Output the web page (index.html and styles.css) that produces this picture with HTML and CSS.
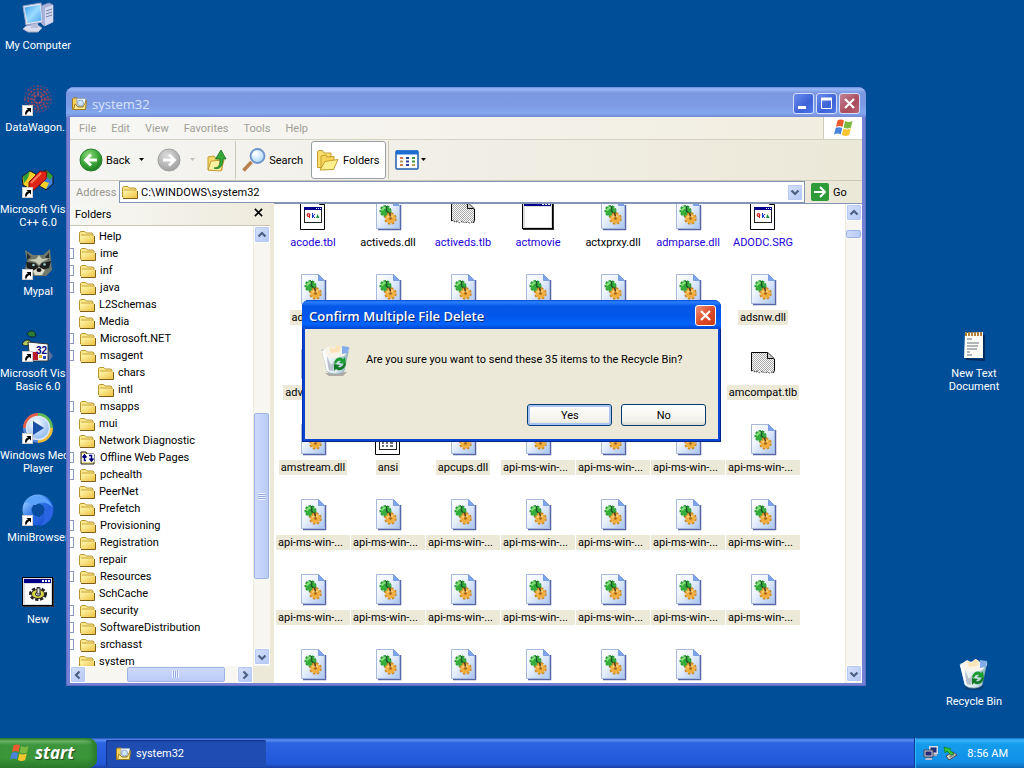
FILE: index.html
```
<!DOCTYPE html>
<html lang="en">
<head>
    <meta charset="UTF-8">
    <title>system32</title>
    <link rel="stylesheet" href="styles.css">
</head>
<body>
<svg class="sprite" width="0" height="0">
    <defs>
        <linearGradient id="gPage" x1="0" y1="0" x2="1" y2="1"><stop offset="0" stop-color="#fff"/><stop offset=".4" stop-color="#eef4fd"/><stop offset="1" stop-color="#a9c5f2"/></linearGradient>
        <linearGradient id="gFolder" x1="0" y1="0" x2="1" y2="1"><stop offset="0" stop-color="#fff9b0"/><stop offset="1" stop-color="#eec040"/></linearGradient>
        <linearGradient id="gScreen" x1="0" y1="0" x2="1" y2="1"><stop offset="0" stop-color="#3c9ef0"/><stop offset=".5" stop-color="#9cdcff"/><stop offset="1" stop-color="#4aa0ee"/></linearGradient>
        <linearGradient id="gBin" x1="0" y1="0" x2="1" y2="0"><stop offset="0" stop-color="#fff"/><stop offset=".5" stop-color="#dcebee"/><stop offset="1" stop-color="#8fb5c4"/></linearGradient>
        <linearGradient id="gRing" x1="0" y1="0" x2="1" y2="1"><stop offset="0" stop-color="#8cc8ff"/><stop offset=".5" stop-color="#2b6fe8"/><stop offset="1" stop-color="#1c4fd0"/></linearGradient>
        <radialGradient id="gBack" cx=".4" cy=".3" r=".7"><stop offset="0" stop-color="#8fdc7c"/><stop offset=".6" stop-color="#3ca83a"/><stop offset="1" stop-color="#1f7d22"/></radialGradient>
        <radialGradient id="gFwd" cx=".4" cy=".3" r=".7"><stop offset="0" stop-color="#dcdcdc"/><stop offset="1" stop-color="#a2a2a2"/></radialGradient>
        <radialGradient id="gLens" cx=".4" cy=".35" r=".7"><stop offset="0" stop-color="#fff"/><stop offset="1" stop-color="#a4d4f6"/></radialGradient>
        <radialGradient id="gWmp" cx=".4" cy=".3" r=".8"><stop offset="0" stop-color="#fff"/><stop offset="1" stop-color="#7fb0ee"/></radialGradient>
        <pattern id="pDots" width="2" height="2" patternUnits="userSpaceOnUse"><rect width="2" height="2" fill="#fff"/><rect width="1" height="1" fill="#a8a8a8"/><rect x="1" y="1" width="1" height="1" fill="#a8a8a8"/></pattern>
    </defs>
    <symbol id="dll" viewBox="0 0 32 32">
        <path d="M6 30.500h22.500V6" fill="none" stroke="#5566a8" stroke-width="1.500"/>
        <path d="M4.500.500h17L27.500 6.500v23h-23z" fill="url(#gPage)" stroke="#a9b9dc"/>
        <path d="M21.500.500V6.500h6z" fill="#7ba4ec" stroke="#7b9ee0"/>
        <circle cx="13.500" cy="12" r="5" fill="none" stroke="#2c9a34" stroke-width="2" stroke-dasharray="2.400 1.100"/>
        <circle cx="13.500" cy="12" r="4.800" fill="#35ad3a"/>
        <path d="M9.500 11.500l3-3 2.500 1" stroke="#86e07c" stroke-width="1.800" fill="none"/>
        <path d="M14.500 7v5l3 3" stroke="#1a5a2c" stroke-width="1.500" fill="none"/>
        <circle cx="18.500" cy="19.500" r="5" fill="none" stroke="#cf8a24" stroke-width="2.500" stroke-dasharray="2.400 1.500"/>
        <circle cx="18.500" cy="19.500" r="4.800" fill="#efae3e"/>
        <path d="M15 18.500l3-2 3 1" stroke="#fbd680" stroke-width="1.500" fill="none"/>
        <circle cx="18.500" cy="19.500" r="1.300" fill="#a0601c"/>
        <path d="M17.500 13.500l1 4" stroke="#5b3a1a" stroke-width="1.500"/>
    </symbol>
    <symbol id="tbl" viewBox="0 0 32 32">
        <path d="M3.500.500h19l5 5v25h-24z" fill="#fff" stroke="#000"/>
        <path d="M22.500.500v5h5" fill="none" stroke="#000"/>
        <rect x="7.500" y="8.500" width="17" height="15" fill="#fff" stroke="#222"/>
        <rect x="7" y="8" width="18" height="3" fill="#00008b"/>
        <path d="M19 9.500h1m1 0h1m1 0h1" stroke="#fff"/>
        <circle cx="11.500" cy="16" r="1.300" fill="none" stroke="#d01818" stroke-width="1.200"/><path d="M12.500 16v3" stroke="#d01818"/>
        <path d="M15.500 14v5m2.500-4l-2 2 2 2" stroke="#1c38c8" fill="none"/>
        <path d="M20.500 15l-1.500 4h3.500z" fill="#16943a"/>
    </symbol>
    <symbol id="inf" viewBox="0 0 32 32">
        <path d="M3.500.500h19l5 5v25h-24z" fill="#fff" stroke="#000"/>
        <rect x="7.500" y="8.500" width="17" height="17" fill="#fff" stroke="#222"/>
        <path d="M10 19h2m2 0h2m2 0h3M10 22h2m2 0h2m2 0h3" stroke="#444" stroke-width="1.500"/>
    </symbol>
    <symbol id="tlb" viewBox="0 0 32 32">
        <path d="M4.500 3.500h17l6 6V21l-2 3-3-2-2 2-3-2-2 2-3-2-3 2-3-2-2-1z" fill="url(#pDots)"/>
        <path d="M4.500 22V3.500h16l7 6.500v11l-1 3" fill="none" stroke="#000"/>
        <path d="M20.500 3.500V9.500h6" fill="#ccc" stroke="#000"/>
        <path d="M4.500 22l2-1 1 2 3-1 2 2 3-2 2 2 3-1 2 1 3-1" fill="none" stroke="#444" stroke-dasharray="2 1"/>
    </symbol>
    <symbol id="exe" viewBox="0 0 32 32">
        <rect x="1" y="2" width="31" height="29" fill="#333"/>
        <rect x=".500" y="1.500" width="30" height="28" fill="#dcdcdc" stroke="#000"/>
        <rect x="2" y="3" width="27" height="4" fill="#00008b"/>
        <rect x="3" y="8" width="26" height="20" fill="#fff"/>
        <path d="M20 5h2m1 0h2m1 0h2" stroke="#fff" stroke-width="2"/>
    </symbol>
    <symbol id="gearexe" viewBox="0 0 32 32">
        <use href="#exe" width="32" height="32"/>
        <ellipse cx="16" cy="18" rx="7" ry="5" fill="none" stroke="#222" stroke-width="4" stroke-dasharray="3 1.500"/>
        <ellipse cx="16" cy="18" rx="6.500" ry="4.500" fill="#d8d44a" stroke="#222"/>
        <ellipse cx="16" cy="18" rx="2.500" ry="2" fill="#fff" stroke="#222"/>
        <path d="M15 12h3v6h-3z" fill="#ddd" stroke="#333"/>
    </symbol>
    <symbol id="folder" viewBox="0 0 16 16">
        <path d="M.500 13V3.500L1.800 2.500h4L7.300 4h5.700l1 1v8z" fill="#fbe98c" stroke="#b8942c"/>
        <path d="M1.500 6.500h12.800l1 1v6.500H1.500z" fill="url(#gFolder)"/>
        <path d="M2 6h12" stroke="#c9a43c"/>
        <path d="M1 14.500h14.500V7" fill="none" stroke="#7e6018"/>
    </symbol>
    <symbol id="openfolder" viewBox="0 0 16 16">
        <path d="M.500 13.500V3l1-1h4l1.500 1.500h6v10z" fill="#f4cf5a" stroke="#a37c1e"/>
        <path d="M5 2.500h8.500v8H5z" fill="#f4f8ff" stroke="#9ab"/>
        <circle cx="8.500" cy="7" r="3" fill="#cfe6fb" stroke="#8fa9cc"/>
        <path d="M1.500 13.500L3 8l3 3h5l3.500-6.500-1 9z" fill="#fdeb94" stroke="#a37c1e"/>
    </symbol>
    <symbol id="offline" viewBox="0 0 16 16">
        <path d="M1 14V2h5l1 2h7v10z" fill="#e9df8a" stroke="#222"/>
        <rect x="2" y="4" width="12" height="8" fill="#fff"/>
        <path d="M6 10.500H4.500V6M2.500 7.500l2-2.500 2 2.500M9 5.500h2.500V10M9.500 8.500l2 2.500 2-2.500" fill="none" stroke="#000080" stroke-width="1.500"/>
    </symbol>
    <symbol id="flag" viewBox="0 0 20 20">
        <path d="M3.500 2.500C6 1 8 1.200 10 2.500L8.500 9C6.500 7.800 4.500 7.800 2 9z" fill="#ea5a2c"/>
        <path d="M11 3c2.500 1.300 5 1.200 7.500 0L17 9.500c-2.500 1.200-5 1.200-7.300 0z" fill="#7cb940"/>
        <path d="M1.700 10C4 8.800 6 8.900 8.200 10L6.700 16.500C4.700 15.300 2.500 15.300 0 16.500z" fill="#4a83dc"/>
        <path d="M9.400 10.600c2.400 1.200 5 1.200 7.400 0L15.200 17c-2.400 1.200-5 1.200-7.300 0z" fill="#f8c430"/>
    </symbol>
    <symbol id="bin" viewBox="0 0 32 32">
        <path d="M5 29l4 3h14l4-4z" fill="#223" opacity=".3"/>
        <path d="M2 6l5 21c3 4 14 4 17 0L29 4z" fill="url(#gBin)" stroke="#8aa9b4" stroke-width=".700"/>
        <path d="M3 6l6-4 4 2 5-3 4 3 6-1 1 4-5 5-8 2-9-1z" fill="#f8f4ea"/>
        <path d="M9 3l5 2 3-4 4 2-2 5-8 1z" fill="#fbe3b8"/>
        <path d="M22 2l7 1-1 6-6 1z" fill="#84ace8"/>
        <path d="M7 12l4 9 5-6-3 12-5-1z" fill="#b7c2cc"/>
        <path d="M14 19c1-5 6-7 9-4l2-2 1 7-7-1 2-2c-2-1-4 0-5 3z" fill="#1e9c34"/>
        <path d="M26 20c-1 5-6 8-10 5l-2 2v-7l6 1-2 2c3 1 5-1 6-4z" fill="#137a26"/>
        <path d="M3 7l5 20" stroke="#fff" stroke-width="2"/>
    </symbol>
    <symbol id="shortcut" viewBox="0 0 11 11">
        <rect x=".500" y=".500" width="10" height="10" fill="#fff" stroke="#ccc"/>
        <path d="M3 9.500C3 6.500 4 5 6 4.500L4.500 3H9v4.500L7.500 6C6 6.500 5 7.500 4.500 9.500z" fill="#000"/>
    </symbol>
    <symbol id="computer" viewBox="0 0 32 32">
        <path d="M19 4l8-3 4 2v17l-9 4-4-4z" fill="#aab3da" stroke="#8d96bd"/>
        <path d="M23 6l8-3v17l-8 4z" fill="#d3d9f0"/>
        <path d="M24 9l6-2m-6 5l6-2m-6 5l6-2" stroke="#7780a8"/>
        <path d="M4 24l10-2 6 4-4 4H6l-5-3z" fill="#d7dcee" stroke="#a2a9c6"/>
        <path d="M9 20h7v6H9z" fill="#b9c0da"/>
        <path d="M1 4l18-3 2 19-17 3z" fill="#dfe6f6" stroke="#9aa5cc"/>
        <path d="M2.500 5.500l15.500-2.500 1.500 15.500L5.500 21z" fill="url(#gScreen)"/>
    </symbol>
    <symbol id="datawagon" viewBox="0 0 32 32">
        <g fill="none" stroke="#a0424c" stroke-width="1.500" stroke-dasharray="2 1.500">
            <circle cx="16" cy="15" r="13" stroke="#5d4a74"/><circle cx="16" cy="15" r="10"/><circle cx="16" cy="15" r="7"/><circle cx="16" cy="15" r="4" stroke="#d65048"/>
            <path d="M16 1v28M2 15h28M6 5l20 20M26 5L6 25" stroke="#7c486a"/>
        </g>
        <circle cx="16" cy="15" r="2.500" fill="#0d3f85"/>
    </symbol>
    <symbol id="vcpp" viewBox="0 0 32 32">
        <path d="M8 5l6 3-1 9-5 6-7-4-1-8z" fill="#f6cf28" stroke="#111"/>
        <path d="M8 5l-7 6 1 6 4-5z" fill="#2f9e37"/>
        <path d="M24 4l7 6v8l-7 6-6-4 2-13z" fill="#3f80dc" stroke="#111"/>
        <path d="M24 4l7 6-3 4-5-5z" fill="#2f9e37"/><path d="M24 23l-6-3 3-5 6 2z" fill="#f6cf28"/>
        <path d="M7 16L18 5l7 1-1 7-12 11-5-2z" fill="#df2418" stroke="#711"/>
        <path d="M9 17L19 7" stroke="#ff7c58" stroke-width="2"/>
    </symbol>
    <symbol id="raccoon" viewBox="0 0 32 32">
        <path d="M3 2l8 5h10l7-6 1 11 1 10-6 6H12l-9-7 2-8z" fill="#72796a"/>
        <path d="M5 5l4 4-4 3zM27 5l-4 4 4 3z" fill="#2a2d29"/>
        <path d="M4 14l9 1 4 4 3-4 9-2-2 7-7 2H11l-6-2z" fill="#1c1f1d"/>
        <path d="M6 12l8-1 3-4 3 4 8-1-8 4-3 3-3-3z" fill="#c9cdb6"/>
        <path d="M11 23l6-4 6 3-3 5h-7z" fill="#dcdccb"/>
        <ellipse cx="17" cy="22" rx="2.500" ry="2" fill="#111"/>
        <circle cx="11.500" cy="17" r="1.300" fill="#9cc"/><circle cx="22.500" cy="16.500" r="1.300" fill="#9cc"/>
    </symbol>
    <symbol id="vb" viewBox="0 0 32 32">
        <path d="M5 4c3-5 8-4 9 2-4 2-7 1-9-2z" fill="#2c7c35" stroke="#123"/>
        <path d="M0 14c3-5 7-5 9-2-2 4-6 5-9 2z" fill="#b4c85c" stroke="#123"/>
        <path d="M25 18l6 8-4 5z" fill="#5a6fa0"/>
        <path d="M6 12l20 2v17H8z" fill="#fff" stroke="#333"/>
        <path d="M10 22h6v8h-6z" fill="#b81c2c"/><path d="M17 25h3v3h-3z" fill="#e0b82c"/><path d="M21 26h3v3h-3z" fill="#2c48b8"/>
        <text x="14" y="24" class="vb-num">32</text>
    </symbol>
    <symbol id="wmp" viewBox="0 0 32 32">
        <g fill="none" stroke-width="4">
            <path d="M16 3A13 13 0 0 0 3 16" stroke="#e2604a"/><path d="M16 3A13 13 0 0 1 29 16" stroke="#5fbb58"/>
            <path d="M29 16A13 13 0 0 1 16 29" stroke="#f0bf38"/><path d="M3 16A13 13 0 0 0 16 29" stroke="#5583d8"/>
        </g>
        <circle cx="16" cy="16" r="11.500" fill="url(#gWmp)" stroke="#dfe8f6" stroke-width="1.500"/>
        <path d="M11 9l11 7-11 7z" fill="#1c4fa8"/>
    </symbol>
    <symbol id="mini" viewBox="0 0 32 32">
        <circle cx="16" cy="16" r="11" fill="none" stroke="url(#gRing)" stroke-width="9"/>
        <path d="M2 9C10-3 26 0 31 14 25 7 17 7 13 12c-3-3-7-4-11-3z" fill="#5aa2fa"/>
        <path d="M31 14c1 8-4 16-13 18 5-5 6-10 3-15 3 0 7-1 10-3z" fill="#2a66e4"/>
        <path d="M11 11l10 0 1 8-5 4-6-4z" fill="#0a4d9e"/>
    </symbol>
    <symbol id="note" viewBox="0 0 32 32">
        <path d="M8 29l18 1V5" fill="none" stroke="#012a5c" stroke-width="2"/>
        <path d="M7 3l18-1v26H6z" fill="#fdfdf8"/>
        <path d="M7 4h18" stroke="#b0803c" stroke-width="4" stroke-dasharray="2 1"/>
        <path d="M9 9h5M9 13h12M9 16h11M9 19h10M9 22h3M9 25h5" stroke="#68707c"/>
    </symbol>
    <symbol id="netpc" viewBox="0 0 16 16">
        <path d="M6 1h9v8H6z" fill="#d6d8e8"/><path d="M7.500 2.500h6v5h-6z" fill="#1c2c7c"/>
        <path d="M10 9h4v2h-4z" fill="#aab"/>
        <path d="M1 5h9v7H1z" fill="#c9cbe0" stroke="#445"/><path d="M2.500 6.500h6v4h-6z" fill="#252a72"/>
        <path d="M3 13h6v2H2z" fill="#bbc"/>
    </symbol>
    <symbol id="eject" viewBox="0 0 16 16">
        <path d="M3 11l7-4 4 3-8 5z" fill="#d8dacb" stroke="#445"/>
        <path d="M6 11l4-2 2 1-5 3z" fill="#888"/>
        <path d="M1 2l7 2-1 1 4 4-3 1-4-4-2 2z" fill="#36c23a" stroke="#127a1c" stroke-width=".700"/>
    </symbol>
    <symbol id="caret" viewBox="0 0 8 8"><path d="M1 2h5L3.500 5z"/></symbol>
    <symbol id="chev" viewBox="0 0 10 10"><path d="M1.500 3.500L5 7l3.500-3.500" fill="none" stroke="#4d6185" stroke-width="2.200"/></symbol>
    <symbol id="cross" viewBox="0 0 21 21"><path d="M6 6l9 9M15 6l-9 9" stroke="#fff" stroke-width="2.200"/></symbol>
</svg>

<main class="desktop">
    <ul class="icons icons-left">
        <li><span class="pic"><svg><use href="#computer"/></svg></span>My Computer</li>
        <li><span class="pic"><svg><use href="#datawagon"/></svg><svg class="link"><use href="#shortcut"/></svg></span>DataWagon...</li>
        <li><span class="pic"><svg><use href="#vcpp"/></svg><svg class="link"><use href="#shortcut"/></svg></span>Microsoft Visual<br>C++ 6.0</li>
        <li><span class="pic"><svg><use href="#raccoon"/></svg><svg class="link"><use href="#shortcut"/></svg></span>Mypal</li>
        <li><span class="pic"><svg><use href="#vb"/></svg><svg class="link"><use href="#shortcut"/></svg></span>Microsoft Visual<br>Basic 6.0</li>
        <li><span class="pic"><svg><use href="#wmp"/></svg><svg class="link"><use href="#shortcut"/></svg></span>Windows Media<br>Player</li>
        <li><span class="pic"><svg><use href="#mini"/></svg><svg class="link"><use href="#shortcut"/></svg></span>MiniBrowser</li>
        <li><span class="pic"><svg><use href="#gearexe"/></svg></span>New</li>
    </ul>
    <ul class="icons icons-right">
        <li><span class="pic"><svg><use href="#note"/></svg></span>New Text<br>Document</li>
        <li><span class="pic"><svg><use href="#bin"/></svg></span>Recycle Bin</li>
    </ul>

    <section class="window">
        <header class="titlebar">
            <svg class="i16"><use href="#openfolder"/></svg>
            <h1>system32</h1>
            <button class="cap" aria-label="Minimize"><svg viewBox="0 0 21 21"><path d="M5 14.500h8" stroke="#fff" stroke-width="3"/></svg></button>
            <button class="cap" aria-label="Maximize"><svg viewBox="0 0 21 21"><path d="M5.500 6v9.500h10V6" fill="none" stroke="#fff"/><path d="M5 6h11" stroke="#fff" stroke-width="3"/></svg></button>
            <button class="cap cap-close" aria-label="Close"><svg><use href="#cross"/></svg></button>
        </header>
        <nav class="menubar">
            <button>File</button><button>Edit</button><button>View</button><button>Favorites</button><button>Tools</button><button>Help</button>
            <span class="brand"><svg><use href="#flag"/></svg></span>
        </nav>
        <div class="toolbar">
            <button class="tool">
                <svg class="i24" viewBox="0 0 24 24"><circle cx="12" cy="12" r="11" fill="url(#gBack)" stroke="#2a7f2c"/><path d="M18 12H7M12 6.500L6.500 12l5.500 5.500" fill="none" stroke="#fff" stroke-width="2.800"/></svg>
                Back <svg class="i8"><use href="#caret"/></svg>
            </button>
            <button class="tool tool-off" aria-label="Forward">
                <svg class="i24" viewBox="0 0 24 24"><circle cx="12" cy="12" r="11" fill="url(#gFwd)" stroke="#a0a0a0"/><path d="M6 12h11M12 6.500l5.500 5.500-5.500 5.500" fill="none" stroke="#fff" stroke-width="2.800"/></svg>
                <svg class="i8"><use href="#caret"/></svg>
            </button>
            <button class="tool tool-up" aria-label="Up">
                <svg class="i24" viewBox="0 0 24 24"><path d="M3 22V9l6-1 1 2h7v12z" fill="#f6d966" stroke="#c09c34"/><path d="M3 22l3-9 13-1-3 11z" fill="#fdf2a0" stroke="#c09c34"/><path d="M9 20c5 0 6-3 6-9h-4.500L16 2l5 9h-3c0 7-3 11-9 9z" fill="#35a83a" stroke="#1a6c20" stroke-width=".800"/></svg>
            </button>
            <button class="tool tool-search">
                <svg class="i24" viewBox="0 0 24 24"><path d="M1.500 22.500l8-8.500" stroke="#b8804a" stroke-width="3.500"/><circle cx="15.500" cy="8" r="7" fill="url(#gLens)" stroke="#6c93cc" stroke-width="1.800"/><path d="M11 8a5 5 0 0 1 4-4" stroke="#fff" stroke-width="1.500" fill="none"/></svg>
                Search
            </button>
            <button class="tool tool-on">
                <svg class="i24" viewBox="0 0 24 24"><path d="M1.500 19.500V4l1-1.500h4L8 5h7v14.500z" fill="#fbdf6c" stroke="#c49c30"/><path d="M5 21V8l5-1 1 2 7-.500V20z" fill="#f8d458" stroke="#c49c30"/><path d="M4 22l5-8.500 13-2L17.500 21.500z" fill="#fdf08c" stroke="#c49c30"/></svg>
                Folders
            </button>
            <button class="tool tool-views" aria-label="Views">
                <svg class="i24" viewBox="0 0 24 24"><rect x="1" y="3" width="22" height="18" rx="1" fill="#fff" stroke="#1c5fae" stroke-width="1.500"/><path d="M1 4.500h22" stroke="#1c6fd0" stroke-width="4"/><path d="M5 10h3M5 17h3" stroke="#d4764a" stroke-width="2"/><path d="M5 13.500h3M17 17h3" stroke="#b89a58" stroke-width="2"/><path d="M11 10h3M11 13.500h3M11 17h3" stroke="#2c3f9c" stroke-width="2"/><path d="M17 10h3M17 13.500h3" stroke="#3d9a44" stroke-width="2"/></svg>
                <svg class="i8"><use href="#caret"/></svg>
            </button>
        </div>
        <div class="addressbar">
            <label for="path">Address</label>
            <div class="combo">
                <svg class="i16"><use href="#folder"/></svg>
                <input id="path" type="text" value="C:\WINDOWS\system32">
                <button class="sb" aria-label="Show addresses"><svg><use href="#chev"/></svg></button>
            </div>
            <button class="go"><svg viewBox="0 0 18 18"><rect width="18" height="18" rx="2" fill="#2f9a38"/><path d="M3 9h11M9 4l5 5-5 5" fill="none" stroke="#fff" stroke-width="2"/></svg>Go</button>
        </div>
        <div class="panes">
            <aside class="sidebar">
                <div class="sidehead">Folders<button aria-label="Close folders"><svg viewBox="0 0 10 10"><path d="M1 1l8 8M9 1L1 9" stroke="#000" stroke-width="1.800"/></svg></button></div>
                <div class="treebox">
                    <ul class="tree">
                        <li><svg><use href="#folder"/></svg>Help</li>
                        <li class="plus"><svg><use href="#folder"/></svg>ime</li>
                        <li class="plus"><svg><use href="#folder"/></svg>inf</li>
                        <li class="plus"><svg><use href="#folder"/></svg>java</li>
                        <li><svg><use href="#folder"/></svg>L2Schemas</li>
                        <li><svg><use href="#folder"/></svg>Media</li>
                        <li class="plus"><svg><use href="#folder"/></svg>Microsoft.NET</li>
                        <li class="plus"><svg><use href="#folder"/></svg>msagent</li>
                        <li class="child"><svg><use href="#folder"/></svg>chars</li>
                        <li class="child"><svg><use href="#folder"/></svg>intl</li>
                        <li class="plus"><svg><use href="#folder"/></svg>msapps</li>
                        <li><svg><use href="#folder"/></svg>mui</li>
                        <li><svg><use href="#folder"/></svg>Network Diagnostic</li>
                        <li class="plus"><svg><use href="#offline"/></svg>Offline Web Pages</li>
                        <li class="plus"><svg><use href="#folder"/></svg>pchealth</li>
                        <li><svg><use href="#folder"/></svg>PeerNet</li>
                        <li><svg><use href="#folder"/></svg>Prefetch</li>
                        <li class="plus"><svg><use href="#folder"/></svg>Provisioning</li>
                        <li class="plus"><svg><use href="#folder"/></svg>Registration</li>
                        <li><svg><use href="#folder"/></svg>repair</li>
                        <li class="plus"><svg><use href="#folder"/></svg>Resources</li>
                        <li><svg><use href="#folder"/></svg>SchCache</li>
                        <li class="plus"><svg><use href="#folder"/></svg>security</li>
                        <li class="plus"><svg><use href="#folder"/></svg>SoftwareDistribution</li>
                        <li class="plus"><svg><use href="#folder"/></svg>srchasst</li>
                        <li><svg><use href="#folder"/></svg>system</li>
                    </ul>
                    <div class="vbar">
                        <button class="sb up" aria-label="Scroll up"><svg><use href="#chev"/></svg></button>
                        <div class="track"><span class="thumb tree-thumb"></span></div>
                        <button class="sb" aria-label="Scroll down"><svg><use href="#chev"/></svg></button>
                    </div>
                </div>
                <div class="hbar">
                    <button class="sb left" aria-label="Scroll left"><svg><use href="#chev"/></svg></button>
                    <div class="track"><span class="thumb"></span></div>
                    <button class="sb right" aria-label="Scroll right"><svg><use href="#chev"/></svg></button>
                </div>
            </aside>
            <div class="listing">
                <ul class="files">
                    <li class="packed"><svg><use href="#tbl"/></svg><span>acode.tbl</span></li>
                    <li class="plain"><svg><use href="#dll"/></svg><span>activeds.dll</span></li>
                    <li class="packed"><svg><use href="#tlb"/></svg><span>activeds.tlb</span></li>
                    <li class="packed"><svg><use href="#exe"/></svg><span>actmovie</span></li>
                    <li class="plain"><svg><use href="#dll"/></svg><span>actxprxy.dll</span></li>
                    <li class="packed"><svg><use href="#dll"/></svg><span>admparse.dll</span></li>
                    <li class="packed"><svg><use href="#tbl"/></svg><span>ADODC.SRG</span></li>

                    <li><svg><use href="#dll"/></svg><span>adptif.dll</span></li>
                    <li><svg><use href="#dll"/></svg></li>
                    <li><svg><use href="#dll"/></svg></li>
                    <li><svg><use href="#dll"/></svg></li>
                    <li><svg><use href="#dll"/></svg></li>
                    <li><svg><use href="#dll"/></svg></li>
                    <li><svg><use href="#dll"/></svg><span>adsnw.dll</span></li>

                    <li><svg><use href="#dll"/></svg><span>advpack.dll</span></li>
                    <li></li>
                    <li></li>
                    <li></li>
                    <li></li>
                    <li></li>
                    <li><svg><use href="#tlb"/></svg><span>amcompat.tlb</span></li>

                    <li><svg><use href="#dll"/></svg><span>amstream.dll</span></li>
                    <li><svg><use href="#inf"/></svg><span>ansi</span></li>
                    <li><svg><use href="#dll"/></svg><span>apcups.dll</span></li>
                    <li class="long"><svg><use href="#dll"/></svg><span>api-ms-win-...</span></li>
                    <li class="long"><svg><use href="#dll"/></svg><span>api-ms-win-...</span></li>
                    <li class="long"><svg><use href="#dll"/></svg><span>api-ms-win-...</span></li>
                    <li class="long"><svg><use href="#dll"/></svg><span>api-ms-win-...</span></li>

                    <li class="long"><svg><use href="#dll"/></svg><span>api-ms-win-...</span></li>
                    <li class="long"><svg><use href="#dll"/></svg><span>api-ms-win-...</span></li>
                    <li class="long"><svg><use href="#dll"/></svg><span>api-ms-win-...</span></li>
                    <li class="long"><svg><use href="#dll"/></svg><span>api-ms-win-...</span></li>
                    <li class="long"><svg><use href="#dll"/></svg><span>api-ms-win-...</span></li>
                    <li class="long"><svg><use href="#dll"/></svg><span>api-ms-win-...</span></li>
                    <li class="long"><svg><use href="#dll"/></svg><span>api-ms-win-...</span></li>

                    <li class="long"><svg><use href="#dll"/></svg><span>api-ms-win-...</span></li>
                    <li class="long"><svg><use href="#dll"/></svg><span>api-ms-win-...</span></li>
                    <li class="long"><svg><use href="#dll"/></svg><span>api-ms-win-...</span></li>
                    <li class="long"><svg><use href="#dll"/></svg><span>api-ms-win-...</span></li>
                    <li class="long"><svg><use href="#dll"/></svg><span>api-ms-win-...</span></li>
                    <li class="long"><svg><use href="#dll"/></svg><span>api-ms-win-...</span></li>
                    <li class="long"><svg><use href="#dll"/></svg><span>api-ms-win-...</span></li>

                    <li><svg><use href="#dll"/></svg></li>
                    <li><svg><use href="#dll"/></svg></li>
                    <li><svg><use href="#dll"/></svg></li>
                    <li><svg><use href="#dll"/></svg></li>
                    <li><svg><use href="#dll"/></svg></li>
                    <li><svg><use href="#dll"/></svg></li>
                </ul>
                <div class="vbar">
                    <button class="sb up" aria-label="Scroll up"><svg><use href="#chev"/></svg></button>
                    <div class="track"><span class="thumb list-thumb"></span></div>
                    <button class="sb" aria-label="Scroll down"><svg><use href="#chev"/></svg></button>
                </div>
            </div>
        </div>
    </section>

    <section class="dialog" role="dialog" aria-labelledby="dlg-title">
        <header class="dlg-title">
            <h2 id="dlg-title">Confirm Multiple File Delete</h2>
            <button class="cap cap-close" aria-label="Close"><svg><use href="#cross"/></svg></button>
        </header>
        <div class="dlg-body">
            <div class="dlg-msg"><svg><use href="#bin"/></svg><p>Are you sure you want to send these 35 items to the Recycle Bin?</p></div>
            <div class="dlg-btns"><button class="btn btn-default">Yes</button><button class="btn">No</button></div>
        </div>
    </section>
</main>

<footer class="taskbar">
    <button class="start"><svg><use href="#flag"/></svg>start</button>
    <button class="task"><svg class="i16"><use href="#openfolder"/></svg>system32</button>
    <div class="tray"><svg class="i16"><use href="#netpc"/></svg><svg class="i16"><use href="#eject"/></svg><time>8:56 AM</time></div>
</footer>
</body>
</html>
```
FILE: styles.css
```
*{
    margin: 0;
    padding: 0;
    box-sizing: border-box;
    list-style: none;
}
body{
    height: 100vh;
    display: flex;
    flex-direction: column;
    overflow: hidden;
    background: #004e98;
    font: 11px/13px Tahoma, Roboto, sans-serif;
    color: #000;
}
button, input{
    font: inherit;
    color: inherit;
    border: 0;
    background: none;
}
svg{
    display: block;
    flex: none;
}
.sprite{
    position: absolute;
}
.i8{
    width: 8px;
    height: 8px;
}
.i16{
    width: 16px;
    height: 16px;
}
.i24{
    width: 24px;
    height: 24px;
}
.vb-num{
    font: bold 10px "Liberation Sans", sans-serif;
    fill: #00007c;
}

/* desktop */
.desktop{
    flex: 1;
    position: relative;
    min-height: 0;
}
.icons{
    position: absolute;
    color: #fff;
    text-align: center;
    white-space: nowrap;
}
.icons li{
    width: 76px;
    height: 82px;
}
.icons-left{
    top: 2px;
    left: 0;
}
.icons-right{
    top: 330px;
    right: 12px;
    display: grid;
    gap: 246px;
}
.pic{
    display: block;
    position: relative;
    width: 32px;
    height: 32px;
    margin: 0 auto 5px;
}
.pic svg{
    width: 32px;
    height: 32px;
}
.pic .link{
    position: absolute;
    left: 0;
    bottom: 0;
    width: 11px;
    height: 11px;
}

/* explorer window */
.window{
    position: absolute;
    left: 66px;
    top: 87px;
    right: 158px;
    bottom: 52px;
    display: flex;
    flex-direction: column;
    padding: 0 4px 3px;
    background: #7480d4;
    border-radius: 8px 8px 0 0;
    box-shadow: inset 1px -1px #5f6cc4, inset -1px 0 #5f6cc4;
}
.titlebar{
    display: flex;
    align-items: center;
    gap: 2px;
    height: 30px;
    margin: 0 -4px;
    padding: 3px 6px 0 6px;
    border-radius: 8px 8px 0 0;
    background: linear-gradient(#6a8ede, #9ab8f6 2px, #7b97e0 6px, #7c9ae4 18px, #84a8ee 26px, #7488d4);
    color: #d8e4f8;
}
h1, h2{
    flex: 1;
    font: 13px/16px "Open Sans", sans-serif;
}
h1{
    padding-left: 2px;
}
.cap{
    width: 21px;
    height: 21px;
    border: 1px solid #d5def8;
    border-radius: 3px;
    background: linear-gradient(135deg, #6b8cec, #3d62d8 60%, #4d78e8);
}
.cap svg{
    width: 21px;
    height: 21px;
    margin: -1px;
}
.cap-close{
    background: linear-gradient(135deg, #c48494, #a84c5c 60%, #b86474);
}
.menubar{
    display: flex;
    height: 23px;
    background: linear-gradient(90deg, #f7f7f5, #f1eddf);
    border-bottom: 1px solid #d4d1c2;
    color: #a0a096;
}
.menubar button{
    padding: 0 7px 0 8px;
}
.menubar button:first-child{
    padding-left: 9px;
}
.brand{
    width: 39px;
    margin-left: auto;
    padding: 1px 0 0 10px;
    background: #fff;
    border-left: 1px solid #cdcabb;
}
.brand svg{
    width: 20px;
    height: 20px;
}
.toolbar{
    display: flex;
    align-items: center;
    height: 41px;
    padding-left: 9px;
    background: linear-gradient(90deg, #f5f5f3, #ece8d8);
    border-bottom: 1px solid #cbc8b8;
}
.tool{
    display: flex;
    align-items: center;
    gap: 3px;
    height: 38px;
}
.tool .i8{
    margin-left: 5px;
}
.tool-off{
    margin-left: 11px;
    fill: #c0c0b8;
}
.tool-up{
    margin-left: 8px;
    padding-right: 6px;
    border-right: 1px solid #cbc8b8;
}
.tool-search{
    margin: 0 8px 0 6px;
}
.tool-on{
    padding: 0 6px 0 4px;
    background: #fff;
    border: 1px solid #98a0a6;
    border-radius: 3px;
}
.tool-views{
    gap: 0;
    margin-left: 2px;
    padding-left: 6px;
    border-left: 1px solid #cbc8b8;
}
.tool-views .i8{
    margin-left: 1px;
}
.addressbar{
    display: flex;
    align-items: center;
    height: 22px;
    padding-left: 6px;
    background: linear-gradient(90deg, #f5f5f3, #ece8d8);
}
.addressbar label{
    width: 43px;
    color: #96968e;
}
.combo{
    flex: 1;
    display: flex;
    align-items: center;
    align-self: stretch;
    padding: 0 1px 0 2px;
    background: #fff;
    border: 1px solid #8494b4;
}
.combo input{
    flex: 1;
    padding-left: 3px;
    outline: 0;
}
.go{
    display: flex;
    align-items: center;
    gap: 4px;
    width: 57px;
    padding-left: 6px;
}
.go svg{
    width: 18px;
    height: 18px;
}

/* folder tree */
.panes{
    flex: 1;
    display: flex;
    min-height: 0;
    background: #ece9d8;
}
.sidebar{
    display: flex;
    flex-direction: column;
    width: 200px;
    min-height: 0;
}
.sidehead{
    display: flex;
    justify-content: space-between;
    align-items: center;
    height: 23px;
    padding: 1px 7px 0 5px;
    background: linear-gradient(90deg, #f7f7f5, #eeebdc);
    border-bottom: 1px solid #c8c5b4;
}
.sidehead svg{
    width: 9px;
    height: 9px;
    margin-bottom: 5px;
}
.treebox{
    flex: 1;
    display: flex;
    min-height: 0;
    background: #fff;
}
.tree{
    flex: 1;
    padding-top: 2px;
    overflow: hidden;
}
.tree li{
    display: flex;
    align-items: center;
    gap: 4px;
    height: 17px;
    padding-left: 9px;
    white-space: nowrap;
}
.tree svg{
    width: 16px;
    height: 16px;
}
.tree .child{
    padding-left: 28px;
}
.tree .plus{
    padding-left: 0;
}
.tree .plus::before{
    content: "";
    width: 3px;
    height: 9px;
    margin-right: 2px;
    border: 1px solid #8a98c0;
    border-left: 0;
}

/* scroll bars */
.vbar, .hbar{
    display: flex;
    background: #f7f6f1;
}
.vbar{
    flex-direction: column;
    width: 17px;
    padding-bottom: 1px;
    border-left: 1px solid #eceadf;
}
.hbar{
    height: 17px;
    margin-right: 17px;
}
.track{
    flex: 1;
    position: relative;
}
.sb{
    display: flex;
    align-items: center;
    justify-content: center;
    width: 16px;
    height: 17px;
    border: 1px solid #fff;
    border-radius: 2px;
    background: linear-gradient(135deg, #d6e2fc, #b4c8f4);
    box-shadow: inset 0 0 0 1px #b8caf4;
}
.sb svg{
    width: 10px;
    height: 10px;
}
.up svg{
    transform: rotate(180deg);
}
.left svg{
    transform: rotate(90deg);
}
.right svg{
    transform: rotate(-90deg);
}
.thumb{
    position: absolute;
    display: flex;
    align-items: center;
    justify-content: center;
    border: 1px solid #9fb4e4;
    border-radius: 2px;
    background: linear-gradient(90deg, #cddafc, #b9caf6);
}
.hbar .thumb{
    left: 27%;
    width: 65%;
    top: 1px;
    bottom: 1px;
    background: linear-gradient(#cddafc, #b9caf6);
}
.tree-thumb{
    left: 0;
    right: 1px;
    top: 42%;
    height: 41%;
}
.list-thumb{
    left: 0;
    right: 1px;
    top: 9px;
    height: 8px;
}
.tree-thumb::after, .hbar .thumb::after{
    content: "";
    width: 7px;
    height: 7px;
    background: repeating-linear-gradient(#eef3ff 0 1px, #94aae0 1px 2px);
}
.hbar .thumb::after{
    background: repeating-linear-gradient(90deg, #eef3ff 0 1px, #94aae0 1px 2px);
}

/* file icons */
.listing{
    flex: 1;
    display: flex;
    margin-left: 4px;
    background: #fff;
    border-top: 1px solid #8494b4;
    overflow: hidden;
}
.files{
    flex: 1;
    display: grid;
    grid-template-columns: repeat(auto-fill, 75px);
    grid-auto-rows: 75px;
    padding-left: 2px;
    margin-top: -5px;
}
.files li{
    display: flex;
    flex-direction: column;
    align-items: center;
    gap: 4px;
    padding-right: 1px;
}
.files svg{
    width: 32px;
    height: 32px;
}
.files span{
    padding: 1px 2px;
    background: #ece9d8;
    white-space: nowrap;
}
.files .long span{
    width: 74px;
}
.files .packed span, .files .plain span{
    background: none;
}
.packed{
    color: #1c00d8;
}

/* delete dialog */
.dialog{
    position: absolute;
    left: 302px;
    top: 300px;
    padding: 0 3px 3px;
    background: #0a45d2;
    border-radius: 7px 7px 0 0;
    box-shadow: inset -1px -1px #00248c, inset 1px 0 #0030b4;
}
.dlg-title{
    display: flex;
    align-items: center;
    height: 29px;
    margin: 0 -3px;
    padding: 2px 5px 0 7px;
    border-radius: 7px 7px 0 0;
    background: linear-gradient(#0348d4, #2b80fc 2px, #0458e8 6px, #0255ea 16px, #0464fc 24px, #0346d0);
    color: #fff;
}
.dlg-title h2{
    font-weight: 600;
    text-shadow: 1px 1px #0a2a80;
}
.dlg-title .cap-close{
    border-color: #fff;
    background: linear-gradient(135deg, #ee9478, #dc4a28 55%, #c83c18);
}
.dlg-body{
    padding: 15px 12px 13px 15px;
    background: #ece9d8;
}
.dlg-msg{
    display: flex;
    gap: 14px;
    padding: 0 24px 28px 0;
}
.dlg-msg svg{
    width: 32px;
    height: 32px;
}
.dlg-msg p{
    padding-top: 9px;
    white-space: nowrap;
}
.dlg-btns{
    display: flex;
    justify-content: flex-end;
    gap: 9px;
}
.btn{
    width: 85px;
    height: 22px;
    border: 1px solid #003c74;
    border-radius: 3px;
    background: linear-gradient(#fff, #f2f1ea 80%, #dcd8cc);
}
.btn-default{
    box-shadow: inset 0 0 0 2px #a9c4f2;
}

/* taskbar */
.taskbar{
    display: flex;
    height: 30px;
    background: linear-gradient(#1f50b8, #5a90f2 2px, #2c63e0 5px, #245bdc 20px, #2358d6 26px, #1941a5);
    color: #fff;
}
.start{
    display: flex;
    align-items: center;
    gap: 5px;
    width: 97px;
    padding: 0 0 0 10px;
    border-radius: 0 9px 9px 0;
    background: linear-gradient(#2f7a30, #6cb868 3px, #3d943c 7px, #3a9639 20px, #2c7a2c);
    box-shadow: inset -4px 0 5px #2a7a2c;
    font: italic bold 17px/20px "Open Sans", sans-serif;
    text-shadow: 1px 1px 1px #1d4a1c;
}
.start svg{
    width: 20px;
    height: 20px;
}
.task{
    display: flex;
    align-items: center;
    gap: 4px;
    width: 160px;
    height: 27px;
    margin: 2px 0 0 9px;
    padding-left: 10px;
    border-radius: 2px;
    background: #1e4cb0;
    box-shadow: inset 1px 1px 1px #12338a;
}
.tray{
    display: flex;
    align-items: center;
    gap: 4px;
    margin-left: auto;
    padding: 0 16px 0 8px;
    border-left: 1px solid #0c3c90;
    background: linear-gradient(#0c70d0, #3cb4f8 2px, #149cec 6px, #1290e8 24px, #0e68b8);
    box-shadow: inset 1px 0 #34b8fa;
}
.tray time{
    padding-left: 4px;
}
```
